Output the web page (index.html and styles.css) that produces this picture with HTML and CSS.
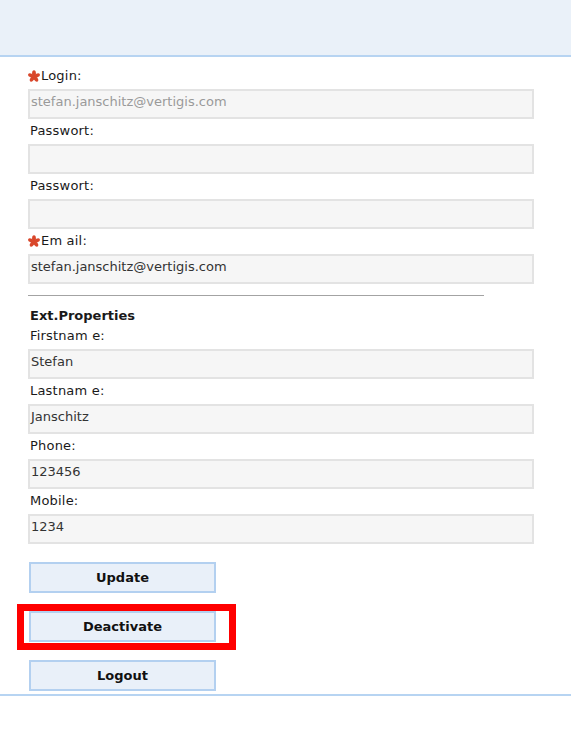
FILE: index.html
```html
<!DOCTYPE html>
<html lang="de">
<head>
    <meta charset="UTF-8">
    <meta name="viewport" content="width=device-width, initial-scale=1.0">
    <title>Benutzerprofil</title>
    <link rel="stylesheet" href="styles.css">
</head>
<body>
    <header class="top-bar"></header>
    <main class="profile">
        <form class="profile-form">
            <label class="field-label required">
                <svg class="star" viewBox="0 0 12 12" aria-hidden="true">
                    <g fill="#d9472b">
                        <ellipse cx="6" cy="3.3" rx="1.9" ry="3.1"/>
                        <ellipse cx="6" cy="3.3" rx="1.9" ry="3.1" transform="rotate(72 6 6.4)"/>
                        <ellipse cx="6" cy="3.3" rx="1.9" ry="3.1" transform="rotate(144 6 6.4)"/>
                        <ellipse cx="6" cy="3.3" rx="1.9" ry="3.1" transform="rotate(216 6 6.4)"/>
                        <ellipse cx="6" cy="3.3" rx="1.9" ry="3.1" transform="rotate(288 6 6.4)"/>
                    </g>
                </svg>Login:
            </label>
            <div class="field-input disabled">stefan.janschitz@vertigis.com</div>

            <label class="field-label">Passwort:</label>
            <div class="field-input"></div>

            <label class="field-label">Passwort:</label>
            <div class="field-input"></div>

            <label class="field-label required">
                <svg class="star" viewBox="0 0 12 12" aria-hidden="true">
                    <g fill="#d9472b">
                        <ellipse cx="6" cy="3.3" rx="1.9" ry="3.1"/>
                        <ellipse cx="6" cy="3.3" rx="1.9" ry="3.1" transform="rotate(72 6 6.4)"/>
                        <ellipse cx="6" cy="3.3" rx="1.9" ry="3.1" transform="rotate(144 6 6.4)"/>
                        <ellipse cx="6" cy="3.3" rx="1.9" ry="3.1" transform="rotate(216 6 6.4)"/>
                        <ellipse cx="6" cy="3.3" rx="1.9" ry="3.1" transform="rotate(288 6 6.4)"/>
                    </g>
                </svg>Em ail:
            </label>
            <div class="field-input">stefan.janschitz@vertigis.com</div>

            <hr class="divider">

            <div class="section-title">Ext.Properties</div>

            <label class="field-label">Firstnam e:</label>
            <div class="field-input">Stefan</div>

            <label class="field-label">Lastnam e:</label>
            <div class="field-input">Janschitz</div>

            <label class="field-label">Phone:</label>
            <div class="field-input">123456</div>

            <label class="field-label">Mobile:</label>
            <div class="field-input">1234</div>

            <div class="actions">
                <button type="button" class="btn">Update</button>
                <div class="marked">
                    <button type="button" class="btn">Deactivate</button>
                    <span class="highlight-box"></span>
                </div>
                <button type="button" class="btn">Logout</button>
            </div>
        </form>
    </main>
</body>
</html>
```
FILE: styles.css
```css
body {
    margin: 0;
    padding: 0;
    background: #fff;
    font-family: "DejaVu Sans", Verdana, sans-serif;
    font-size: 13px;
    color: #1a1a1a;
}
.top-bar {
    height: 55px;
    background-color: #eaf1f9;
    border-bottom: 2px solid #b7d4f2;
}
.profile {
    padding: 9px 37px 0 28px;
    border-bottom: 2px solid #b7d4f2;
}
.profile-form {
    display: flex;
    flex-direction: column;
}
.field-label {
    display: flex;
    align-items: center;
    height: 20px;
    line-height: 20px;
    margin-bottom: 3px;
    padding-left: 2px;
    letter-spacing: 0.2px;
}
.field-label.required {
    padding-left: 0;
}
.star {
    width: 12px;
    height: 12px;
    margin-right: 1px;
    margin-top: -1px;
}
.field-input {
    box-sizing: border-box;
    height: 30px;
    margin-bottom: 2px;
    padding: 0 1px;
    line-height: 21px;
    background-color: #f6f6f6;
    border: 2px solid #e3e3e3;
    color: #333;
}
.field-input.disabled {
    color: #9a9a9a;
}
.divider {
    width: 456px;
    margin: 9px 0 10px 0;
    border: 0;
    border-top: 1px solid #a3a3a3;
}
.section-title {
    height: 20px;
    line-height: 20px;
    padding-left: 2px;
    font-weight: bold;
}
.actions {
    display: flex;
    flex-direction: column;
    align-items: flex-start;
    gap: 18px;
    padding: 16px 0 3px 1px;
}
.btn {
    box-sizing: border-box;
    width: 187px;
    height: 31px;
    background-color: #e9f0f9;
    border: 2px solid #b3d0f0;
    font-family: "DejaVu Sans", Verdana, sans-serif;
    font-size: 13px;
    font-weight: bold;
    color: #111;
    cursor: pointer;
}
.marked {
    position: relative;
}
/* roter Markierungsrahmen um Deactivate */
.highlight-box {
    position: absolute;
    left: -12px;
    top: -7px;
    width: 219px;
    height: 46px;
    box-sizing: border-box;
    border: 7px solid #f00;
    pointer-events: none;
}
```
